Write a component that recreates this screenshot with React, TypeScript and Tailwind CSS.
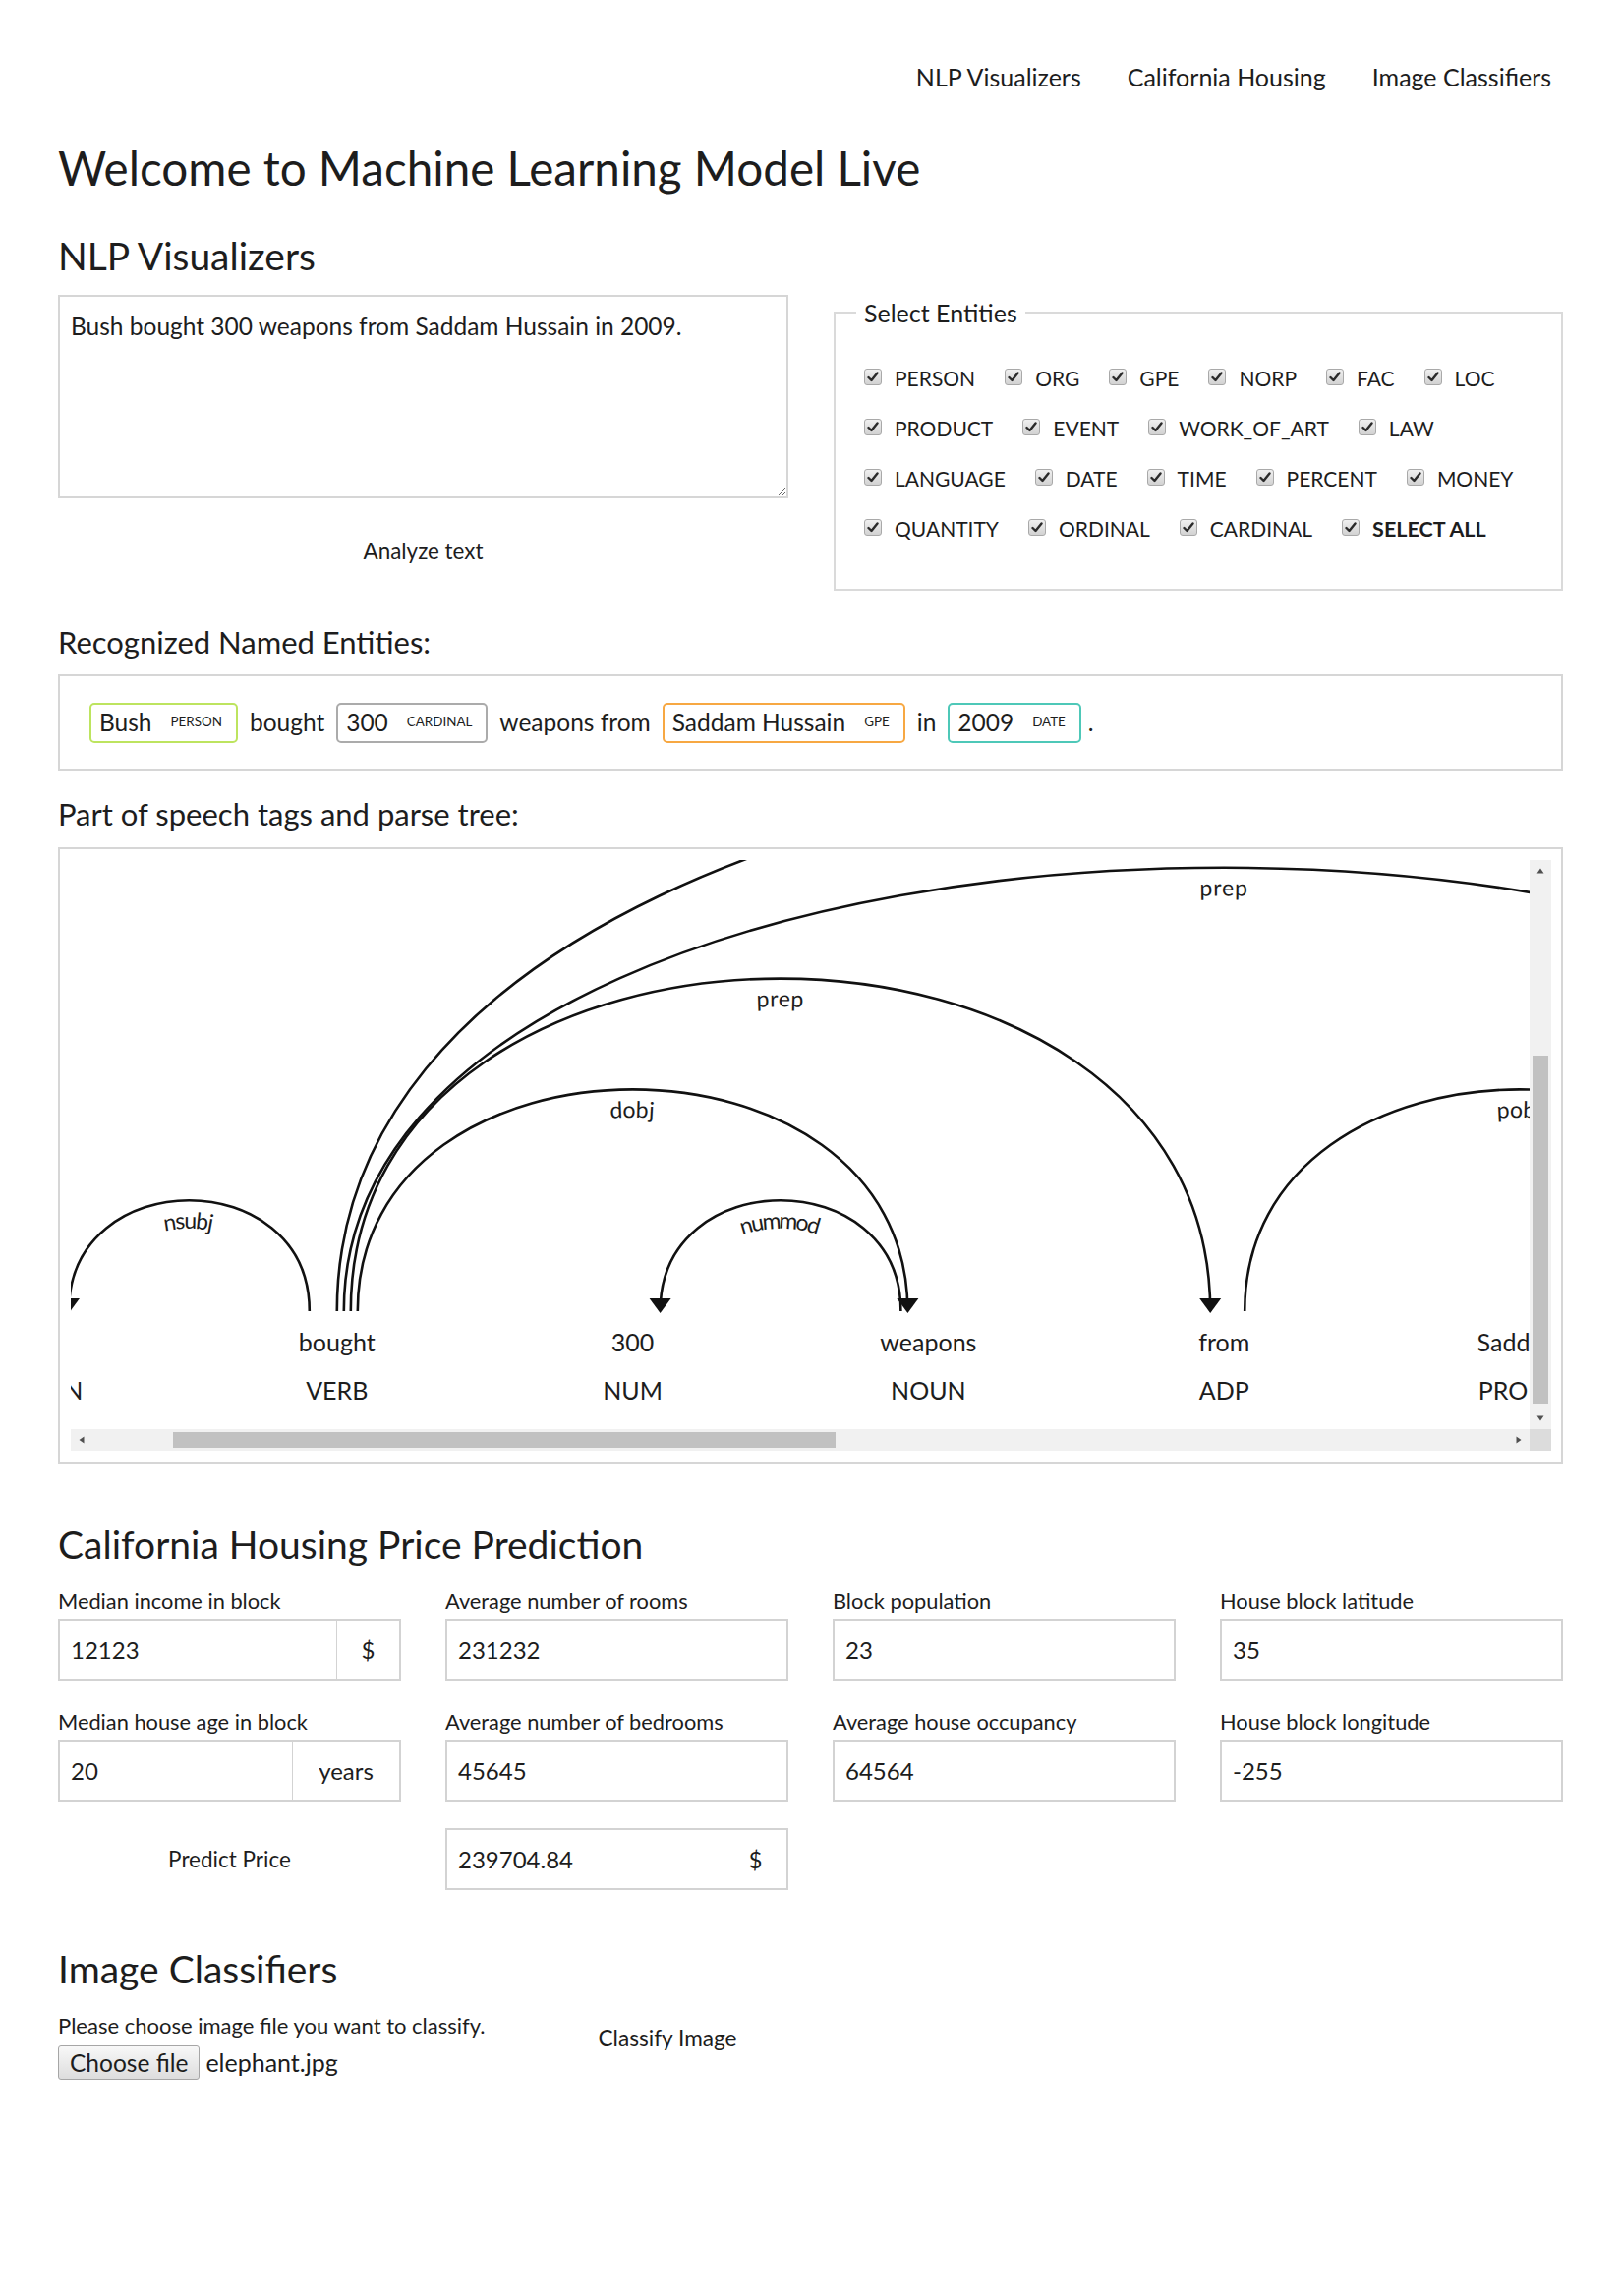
import React from "react"

const ENTITY_ROWS = [
  ["PERSON", "ORG", "GPE", "NORP", "FAC", "LOC"],
  ["PRODUCT", "EVENT", "WORK_OF_ART", "LAW"],
  ["LANGUAGE", "DATE", "TIME", "PERCENT", "MONEY"],
  ["QUANTITY", "ORDINAL", "CARDINAL", "SELECT ALL"],
]

// punctuation is collapsed into the previous token, like displaCy does
const TOKENS = [
  { text: "Bush", tag: "PROPN" },
  { text: "bought", tag: "VERB" },
  { text: "300", tag: "NUM" },
  { text: "weapons", tag: "NOUN" },
  { text: "from", tag: "ADP" },
  { text: "Saddam", tag: "PROPN" },
  { text: "Hussain", tag: "PROPN" },
  { text: "in", tag: "ADP" },
  { text: "2009.", tag: "NUM" },
]

const ARCS = [
  { start: 0, end: 1, level: 1, label: "nsubj", dir: "left" },
  { start: 2, end: 3, level: 1, label: "nummod", dir: "left" },
  { start: 1, end: 3, level: 2, label: "dobj", dir: "right" },
  { start: 1, end: 4, level: 3, label: "prep", dir: "right" },
  { start: 4, end: 6, level: 2, label: "pobj", dir: "right" },
  { start: 5, end: 6, level: 1, label: "compound", dir: "left" },
  { start: 1, end: 7, level: 4, label: "prep", dir: "right" },
  { start: 7, end: 8, level: 1, label: "pobj", dir: "right" },
  { start: 1, end: 8, level: 5, label: "punct", dir: "right" },
]

function CheckBox() {
  return (
    <span className="flex h-[17px] w-[18px] -translate-y-[2px] items-center justify-center rounded-[3px] border border-[#a9a9a9] bg-gradient-to-b from-[#f0f0f0] to-[#d2d2d2]">
      <svg width="12" height="11" viewBox="0 0 12 11">
        <path d="M1.5 6 L4.5 9 L10.5 1.5" fill="none" stroke="#2b2b2b" strokeWidth="2.4" strokeLinecap="round" strokeLinejoin="round" />
      </svg>
    </span>
  )
}

function Mark({ text, label, color }: { text: string; label: string; color: string }) {
  return (
    <span className={`flex h-[41px] items-center gap-[19px] rounded-[5px] border-2 pl-[8px] pr-[14px] ${color}`}>
      <span className="text-[24.5px] leading-none">{text}</span>
      <span className="text-[13.4px] leading-none">{label}</span>
    </span>
  )
}

function ParseTree() {
  const d = 300.8
  const ox = -30
  const oy = 459
  const spacing = 28
  const aw = 13
  const highest = 5
  return (
    <svg width="1484" height="579" viewBox="0 0 1484 579" className="block font-['Lato',sans-serif]">
      {TOKENS.map((t, i) => (
        <g key={i} fill="#1d1d1d" textAnchor="middle" fontSize="25">
          <text x={ox + i * d} y={500}>
            {t.text}
          </text>
          <text x={ox + i * d} y={549}>
            {t.tag}
          </text>
        </g>
      ))}
      {ARCS.map((a, i) => {
        const sx = ox + a.start * d + (spacing * (highest - a.level)) / 4
        const ex = ox + a.end * d - (spacing * (highest - a.level)) / 4
        const cy = oy - (a.level * d) / 2
        const head =
          a.dir === "left"
            ? `M${sx},${oy + 2} L${sx - aw + 2},${oy - aw} ${sx + aw - 2},${oy - aw}`
            : `M${ex},${oy + 2} L${ex + aw - 2},${oy - aw} ${ex - aw + 2},${oy - aw}`
        return (
          <g key={i}>
            <path id={`arc-${i}`} d={`M${sx},${oy} C${sx},${cy} ${ex},${cy} ${ex},${oy}`} fill="none" stroke="#111" strokeWidth="2.6" />
            <text dy="1.25em" fontSize="23" letterSpacing="1" fill="#1d1d1d">
              <textPath href={`#arc-${i}`} startOffset="50%" textAnchor="middle">
                {a.label}
              </textPath>
            </text>
            <path d={head} fill="#111" />
          </g>
        )
      })}
    </svg>
  )
}

function Arrow({ rot, color }: { rot: number; color: string }) {
  return (
    <svg width="8" height="8" viewBox="0 0 8 8" style={{ transform: `rotate(${rot}deg)` }}>
      <path d="M4 1.5 L7.5 6.5 L0.5 6.5 Z" fill={color} />
    </svg>
  )
}

function InputGroup({ value, addon, addonWidth }: { value: string; addon?: string; addonWidth?: string }) {
  return (
    <div className="flex h-[63px] border-2 border-[#d3d3d3] bg-white">
      <div className="flex flex-1 items-center pl-[11px] text-[24px]">{value}</div>
      {addon && (
        <div className={`flex items-center justify-center border-l border-[#d3d3d3] text-[24px] ${addonWidth}`}>{addon}</div>
      )}
    </div>
  )
}

function Field({ label, value, addon, addonWidth }: { label: string; value: string; addon?: string; addonWidth?: string }) {
  return (
    <div>
      <div className="mb-[3px] text-[21.8px] leading-[30px]">{label}</div>
      <InputGroup value={value} addon={addon} addonWidth={addonWidth} />
    </div>
  )
}

export default function App() {
  return (
    <div className="min-h-[2336px] bg-white pl-[59px] pr-[60px] font-['Lato',sans-serif] text-[#1d1d1d]">
      <nav className="flex justify-end gap-[47px] pr-[12px] pt-[60px] text-[25px] leading-[36px]">
        <a>NLP Visualizers</a>
        <a>California Housing</a>
        <a>Image Classifiers</a>
      </nav>

      <h1 className="mt-[46px] text-[47.6px] leading-[58px]">Welcome to Machine Learning Model Live</h1>

      <h2 className="mt-[37px] text-[39px] leading-[46px]">NLP Visualizers</h2>

      <div className="mt-[17px] flex gap-[46px]">
        <div className="w-[743px]">
          <textarea
            readOnly
            defaultValue="Bush bought 300 weapons from Saddam Hussain in 2009."
            className="block h-[207px] w-full resize border-2 border-[#d6d6d6] px-[11px] py-[12px] text-[24.5px] leading-[36px] outline-none"
          />
          <div className="mt-[39px] flex justify-center">
            <button className="text-[22.4px] leading-[30px]">Analyze text</button>
          </div>
        </div>
        <fieldset className="mt-[3px] flex-1 border-2 border-[#dadada] pb-[44px] pl-[29px] pt-[35px]">
          <legend className="-ml-[8px] px-[8px] text-[25px] leading-[30px]">Select Entities</legend>
          <div className="flex flex-col gap-[17px]">
            {ENTITY_ROWS.map((row, r) => (
              <div key={r} className="flex h-[34px] items-center gap-[30px]">
                {row.map((e) => (
                  <label key={e} className="flex items-center gap-[13px]">
                    <CheckBox />
                    <span className={e === "SELECT ALL" ? "text-[21.5px] font-bold" : "text-[21px]"}>{e}</span>
                  </label>
                ))}
              </div>
            ))}
          </div>
        </fieldset>
      </div>

      <h4 className="mt-[34px] text-[31px] leading-[36px]">Recognized Named Entities:</h4>
      <div className="mt-[15px] flex h-[98px] items-center gap-[12px] border-2 border-[#d6d6d6] pl-[30px] text-[24.5px]">
        <Mark text="Bush" label="PERSON" color="border-[#bde45f]" />
        <span>bought</span>
        <Mark text="300" label="CARDINAL" color="border-[#ababab]" />
        <span>weapons from</span>
        <Mark text="Saddam Hussain" label="GPE" color="border-[#f7a843]" />
        <span>in</span>
        <Mark text="2009" label="DATE" color="border-[#4ec8b8]" />
        <span className="-ml-[5px]">.</span>
      </div>

      <h4 className="mt-[26px] text-[31px] leading-[36px]">Part of speech tags and parse tree:</h4>
      <div className="mt-[16px] border-2 border-[#d6d6d6] p-[11px]">
        <div className="grid grid-cols-[1484px_22px] grid-rows-[579px_22px]">
          <div className="overflow-hidden">
            <ParseTree />
          </div>
          <div className="flex flex-col bg-[#f1f1f1]">
            <div className="flex h-[22px] items-center justify-center">
              <Arrow rot={0} color="#505050" />
            </div>
            <div className="flex-1 px-[3px] pt-[177px]">
              <div className="h-[354px] bg-[#c1c1c1]" />
            </div>
            <div className="flex h-[22px] items-center justify-center">
              <Arrow rot={180} color="#505050" />
            </div>
          </div>
          <div className="flex bg-[#f1f1f1]">
            <div className="flex w-[22px] items-center justify-center">
              <Arrow rot={-90} color="#505050" />
            </div>
            <div className="flex-1 py-[3px] pl-[82px]">
              <div className="h-full w-[674px] bg-[#c1c1c1]" />
            </div>
            <div className="flex w-[22px] items-center justify-center">
              <Arrow rot={90} color="#505050" />
            </div>
          </div>
          <div className="bg-[#dcdcdc]" />
        </div>
      </div>

      <h2 className="mt-[59px] text-[39px] leading-[46px]">California Housing Price Prediction</h2>
      <div className="mt-[20px] grid grid-cols-4 gap-x-[45px] gap-y-[27px]">
        <Field label="Median income in block" value="12123" addon="$" addonWidth="w-[64px]" />
        <Field label="Average number of rooms" value="231232" />
        <Field label="Block population" value="23" />
        <Field label="House block latitude" value="35" />
        <Field label="Median house age in block" value="20" addon="years" addonWidth="w-[109px]" />
        <Field label="Average number of bedrooms" value="45645" />
        <Field label="Average house occupancy" value="64564" />
        <Field label="House block longitude" value="-255" />
        <div className="flex items-center justify-center">
          <button className="text-[22.5px] leading-[30px]">Predict Price</button>
        </div>
        <InputGroup value="239704.84" addon="$" addonWidth="w-[64px]" />
      </div>

      <h2 className="mt-[57px] text-[39px] leading-[46px]">Image Classifiers</h2>
      <div className="mt-[21px] flex items-start gap-[115px]">
        <div>
          <div className="text-[22px] leading-[28px]">Please choose image file you want to classify.</div>
          <div className="mt-[5px] flex items-center gap-[6px]">
            <button className="h-[35px] rounded-[3px] border border-[#a6a6a6] bg-gradient-to-b from-[#f8f8f8] to-[#dddddd] px-[11px] text-[24.5px] leading-none">
              Choose file
            </button>
            <span className="text-[25px]">elephant.jpg</span>
          </div>
        </div>
        <button className="mt-[13px] text-[22.6px] leading-[28px]">Classify Image</button>
      </div>
    </div>
  )
}
